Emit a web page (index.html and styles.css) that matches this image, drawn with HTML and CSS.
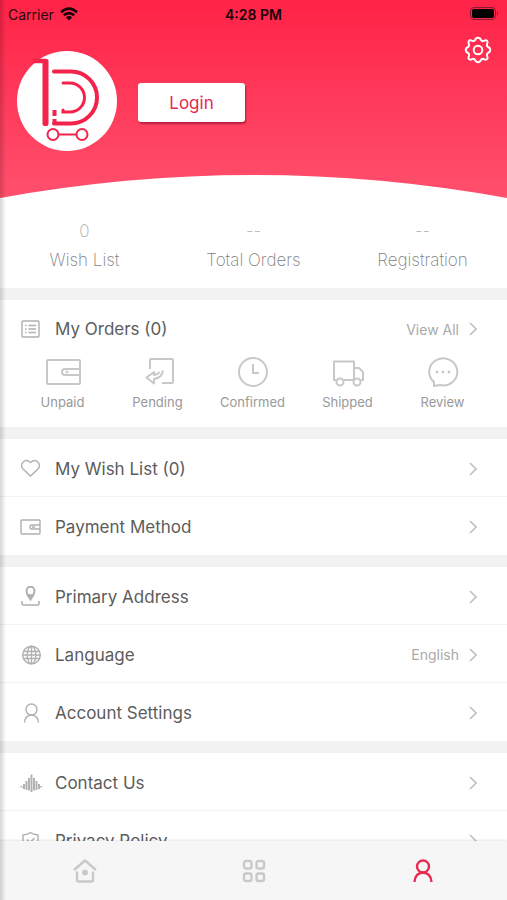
FILE: index.html
```html
<!DOCTYPE html>
<html lang="en">
<head>
    <meta charset="utf-8">
    <meta name="viewport" content="width=device-width, initial-scale=1">
    <title>My Account</title>

    <link rel="stylesheet" href="styles.css">
</head>
<body>

<main class="content">

    <header class="hero">
        <div class="status-bar">
            <div class="carrier">
                <span>Carrier</span>
                <svg width="18" height="14" viewBox="0 0 18 14" fill="none" stroke="#16040a" stroke-width="2.6">
                    <path d="M1 5.2Q9-2 17 5.2"/>
                    <path d="M3.8 8.3Q9 3.8 14.2 8.3"/>
                    <path d="M9 13.6L5.9 10.4Q9 7.8 12.1 10.4Z" fill="#16040a" stroke="none"/>
                </svg>
            </div>
            <span class="time">4:28 PM</span>
            <svg class="battery" width="29" height="14" viewBox="0 0 29 14">
                <rect x="0.5" y="0.5" width="25" height="12" rx="3.5" fill="none" stroke="#8c1730"/>
                <rect x="2" y="2" width="22" height="9" rx="2" fill="#000"/>
                <path d="M27 4.5Q29 6.5 27 8.5Z" fill="#8c1730"/>
            </svg>
        </div>

        <div class="profile">
            <svg class="avatar" width="100" height="100" viewBox="0 0 100 100" fill="none" stroke="#f3234b">
                <circle cx="50" cy="50" r="50" fill="#fff" stroke="none"/>
                <path d="M16 10H29" stroke-width="4.5"/>
                <path d="M25.500 8H30Q31.500 8 31.500 9.500V73Q31.500 75 29.500 75H27.500Q25.500 75 25.500 73Z" fill="#f3234b" stroke="none"/>
                <path d="M37 20.500H54A26 26 0 0 1 54 72.500H37" stroke-width="4" stroke-linecap="round"/>
                <path d="M46 32H53A14.500 14.500 0 0 1 53 61H46V59" stroke-width="3" stroke-linecap="round"/>
                <path d="M37.500 59V65M37.500 68V73" stroke-width="4"/>
                <path d="M42 83.500H59" stroke-width="2"/>
                <circle cx="36" cy="83.500" r="5.500" stroke-width="2"/>
                <circle cx="65" cy="83.500" r="5.500" stroke-width="2"/>
            </svg>
            <button class="login" type="button">Login</button>
            <button class="settings" type="button" aria-label="Settings">
                <svg width="28" height="28" viewBox="0 0 28 28" fill="none" stroke="#fff" stroke-width="2" stroke-linejoin="round">
                    <circle cx="14" cy="14" r="4.300"/>
                    <path d="M11 4.200C12 1 16 1 17 4.200Q18.200 5.600 19.800 4.900C22.800 3.500 24.500 5.200 23.100 8.200Q22.400 9.800 23.800 11C27 12 27 16 23.800 17Q22.400 18.200 23.100 19.800C24.500 22.800 22.800 24.500 19.800 23.100Q18.200 22.400 17 23.800C16 27 12 27 11 23.800Q9.800 22.400 8.200 23.100C5.200 24.500 3.500 22.800 4.900 19.800Q5.600 18.200 4.200 17C1 16 1 12 4.200 11Q5.600 9.800 4.900 8.200C3.500 5.200 5.200 3.500 8.200 4.900Q9.800 5.600 11 4.200Z"/>
                </svg>
            </button>
        </div>

        <svg class="curve" viewBox="0 0 507 23" preserveAspectRatio="none">
            <path d="M0 23Q253.500 -23 507 23Z" fill="#fff"/>
        </svg>
    </header>

    <section class="stats">
        <div class="stat">
            <span class="stat-value">0</span>
            <span>Wish List</span>
        </div>
        <div class="stat">
            <span class="stat-value">--</span>
            <span>Total Orders</span>
        </div>
        <div class="stat">
            <span class="stat-value">--</span>
            <span>Registration</span>
        </div>
    </section>

    <section class="group">
        <a class="row row-orders" href="#">
            <svg class="icon" viewBox="0 0 22 22">
                <rect x="2" y="3" width="17" height="16" rx="1"/>
                <path d="M5 7.500H6.500M8.500 7.500H16M5 11H6.500M8.500 11H16M5 14.500H6.500M8.500 14.500H16"/>
            </svg>
            <span class="label">My Orders (0)</span>
            <span class="note">View All</span>
            <svg class="arrow" viewBox="0 0 8 14"><path d="M1 1L7 7L1 13"/></svg>
        </a>
        <nav class="orders">
            <a href="#">
                <svg viewBox="0 0 36 32">
                    <rect x="2" y="4" width="33" height="24" rx="1"/>
                    <path d="M35 13H20Q17 13 17 16T20 19H35"/>
                    <circle cx="22" cy="16" r="0.500"/>
                </svg>
                Unpaid
            </a>
            <a href="#">
                <svg viewBox="0 0 36 32">
                    <path d="M10 13V4Q10 3 11 3H32Q33 3 33 4V26Q33 27 32 27H22"/>
                    <path d="M23 14.500Q22 22 14 23V27.500L6.500 21.500L14 16V19Q18 18.500 19.500 16"/>
                </svg>
                Pending
            </a>
            <a href="#">
                <svg viewBox="0 0 36 32">
                    <circle cx="18" cy="16" r="14"/>
                    <path d="M18 8V17H24"/>
                </svg>
                Confirmed
            </a>
            <a href="#">
                <svg viewBox="0 0 36 32">
                    <path d="M6 24H4V5.500H24V24H13"/>
                    <path d="M24 12H29L33 16V24H31M24 24V12"/>
                    <circle cx="10" cy="26" r="3.500"/>
                    <circle cx="27" cy="26" r="3.500"/>
                </svg>
                Shipped
            </a>
            <a href="#">
                <svg viewBox="0 0 36 32">
                    <path d="M9 26A14 13.500 0 1 1 15 29L9 30Z"/>
                    <path d="M10.800 16H13.200M16.800 16H19.200M22.800 16H25.200" stroke-width="2.4"/>
                </svg>
                Review
            </a>
        </nav>
    </section>

    <section class="group">
        <a class="row" href="#">
            <svg class="icon" viewBox="0 0 22 22">
                <path d="M10.500 18L3 11C-1 6 5 -0.500 10.500 4.500C16 -0.500 22 6 18 11Z"/>
            </svg>
            <span class="label">My Wish List (0)</span>
            <svg class="arrow" viewBox="0 0 8 14"><path d="M1 1L7 7L1 13"/></svg>
        </a>
        <a class="row" href="#">
            <svg class="icon" viewBox="0 0 22 22">
                <rect x="1" y="4" width="19" height="14" rx="1"/>
                <path d="M20 9H12Q10 9 10 11T12 13H20M12 11H15"/>
            </svg>
            <span class="label">Payment Method</span>
            <svg class="arrow" viewBox="0 0 8 14"><path d="M1 1L7 7L1 13"/></svg>
        </a>
    </section>

    <section class="group">
        <a class="row" href="#">
            <svg class="icon" viewBox="0 0 22 22">
                <path d="M10.500 13.500Q6.500 8 6.500 5A4 4.300 0 0 1 14.500 5Q14.500 8 10.500 13.500Z" stroke-width="2"/>
                <path d="M9 8L10.500 12L12 8" stroke-width="2"/>
                <path d="M2 15V17.500Q2 19 3.500 19H17.500Q19 19 19 17.500V15" stroke-width="1.600"/>
            </svg>
            <span class="label">Primary Address</span>
            <svg class="arrow" viewBox="0 0 8 14"><path d="M1 1L7 7L1 13"/></svg>
        </a>
        <a class="row" href="#">
            <svg class="icon" viewBox="0 0 22 22">
                <circle cx="11.500" cy="11" r="8.800"/>
                <ellipse cx="11.500" cy="11" rx="4.300" ry="8.800"/>
                <path d="M11.500 2V20M3.500 7.500H19.500M3.500 14.500H19.500M3 11H20"/>
            </svg>
            <span class="label">Language</span>
            <span class="note">English</span>
            <svg class="arrow" viewBox="0 0 8 14"><path d="M1 1L7 7L1 13"/></svg>
        </a>
        <a class="row" href="#">
            <svg class="icon" viewBox="0 0 22 22">
                <circle cx="11.500" cy="7.500" r="5.500"/>
                <path d="M4.500 20.500Q5 13.500 11.500 13Q18 13.500 18.500 20.500"/>
            </svg>
            <span class="label">Account Settings</span>
            <svg class="arrow" viewBox="0 0 8 14"><path d="M1 1L7 7L1 13"/></svg>
        </a>
    </section>

    <section class="group">
        <a class="row" href="#">
            <svg class="icon" viewBox="0 0 22 22">
                <path d="M1.500 14V15.500M4 12V17M6.500 9V18M9 6V18.500M11.500 2.500V20M14 6V18.500M16.500 9V18M19 12V17M21.200 14V15.500" stroke-width="1.900"/>
            </svg>
            <span class="label">Contact Us</span>
            <svg class="arrow" viewBox="0 0 8 14"><path d="M1 1L7 7L1 13"/></svg>
        </a>
        <a class="row" href="#">
            <svg class="icon" viewBox="0 0 22 22">
                <path d="M3 5Q8 4.500 10.500 2.500Q13 4.500 18 5V11Q18 17 10.500 20Q3 17 3 11Z"/>
                <path d="M7 9.500L10 12.500L14.500 8"/>
            </svg>
            <span class="label">Privacy Policy</span>
            <svg class="arrow" viewBox="0 0 8 14"><path d="M1 1L7 7L1 13"/></svg>
        </a>
    </section>

</main>

<nav class="tab-bar">
    <a href="#" aria-label="Home">
        <svg viewBox="0 0 26 26">
            <path d="M2 12L13 2.500L24 12"/>
            <path d="M5 13.500V21.500Q5 23.500 7 23.500H19Q21 23.500 21 21.500V13.500"/>
            <circle cx="13" cy="14.500" r="1.800" fill="#c9c9c9"/>
        </svg>
    </a>
    <a href="#" aria-label="Categories">
        <svg viewBox="0 0 26 26">
            <rect x="3" y="3" width="7.500" height="7.500" rx="2"/>
            <rect x="15.500" y="3" width="7.500" height="7.500" rx="2"/>
            <rect x="3" y="15.500" width="7.500" height="7.500" rx="2"/>
            <rect x="15.500" y="15.500" width="7.500" height="7.500" rx="2"/>
        </svg>
    </a>
    <a class="active" href="#" aria-label="Account">
        <svg viewBox="0 0 26 26">
            <circle cx="13" cy="8.500" r="6"/>
            <path d="M4.500 24Q5 15 13 14.500Q21 15 21.500 24"/>
        </svg>
    </a>
</nav>

</body>
</html>
```
FILE: styles.css
```css
* {
    box-sizing: border-box;
}

body {
    font-family: Inter, 'Liberation Sans', sans-serif;
    background-color: #f2f2f2;
    color: #5c5c5c;
    margin: 0;
    height: 100vh;
    display: flex;
    flex-direction: column;
}

/* soft shadow down the left edge of the screen */
body::before {
    content: '';
    position: fixed;
    top: 0;
    bottom: 0;
    left: 0;
    width: 6px;
    background: linear-gradient(to right, rgba(0, 0, 0, 0.16), rgba(0, 0, 0, 0));
    z-index: 2;
    pointer-events: none;
}

a {
    color: inherit;
    text-decoration: none;
}

button {
    font-family: inherit;
    border: none;
    padding: 0;
    cursor: pointer;
}

svg {
    display: block;
    flex-shrink: 0;
}

.content {
    flex: 1;
    min-height: 0;
    overflow: hidden;
    display: flex;
    flex-direction: column;
    gap: 12px;
}

.content > * {
    flex-shrink: 0;
}

/* header */
.hero {
    background: linear-gradient(#ff2347, #ff506d);
    margin-bottom: -12px;
}

.status-bar {
    display: grid;
    grid-template-columns: 1fr auto 1fr;
    align-items: center;
    height: 28px;
    padding: 0 8px;
    font-size: 14px;
    color: #2a060e;
}

.carrier {
    display: flex;
    align-items: center;
    gap: 6px;
}

.time {
    font-weight: 600;
    color: #16040a;
}

.battery {
    justify-self: end;
}

.profile {
    display: flex;
    align-items: center;
    padding: 8px 15px 10px 17px;
    height: 147px;
}

.login {
    width: 107px;
    height: 39px;
    margin-top: 4px;
    margin-left: 21px;
    background-color: #fff;
    color: #e8294f;
    font-size: 17px;
    border-radius: 3px;
    box-shadow: 1px 2px 2px rgba(110, 0, 30, 0.5);
}

.settings {
    align-self: flex-start;
    margin-left: auto;
    background: none;
}

.curve {
    width: 100%;
    height: 23px;
}

/* counters */
.stats {
    display: grid;
    grid-template-columns: repeat(3, 1fr);
    background-color: #fff;
    padding: 21px 0 16px;
    text-align: center;
    font-size: 17px;
    font-weight: 200;
    color: #808080;
}

.stat {
    display: flex;
    flex-direction: column;
    gap: 5px;
    line-height: 24px;
}

.stat-value {
    color: #aaa;
}

/* menu */
.group {
    background-color: #fff;
}

.row {
    display: flex;
    align-items: center;
    height: 58px;
    padding: 2px 30px 0 20px;
    border-bottom: 1px solid #f3f3f3;
    font-size: 17px;
}

.row:last-child {
    border-bottom: none;
}

.icon {
    width: 22px;
    height: 22px;
    margin-right: 13px;
    fill: none;
    stroke: #b0b0b0;
    stroke-width: 1.4;
}

.label {
    flex: 1;
}

.note {
    font-size: 14px;
    color: #aaa;
    margin-right: 10px;
}

.arrow {
    width: 8px;
    height: 14px;
    fill: none;
    stroke: #c0c0c0;
    stroke-width: 1.6;
}

.row-orders {
    border-bottom: none;
    height: 56px;
}

.orders {
    display: grid;
    grid-template-columns: repeat(5, 1fr);
    padding: 0 17px 15px 15px;
    font-size: 13px;
    line-height: 20px;
    color: #999;
}

.orders a {
    display: flex;
    flex-direction: column;
    align-items: center;
    gap: 4px;
}

.orders svg {
    width: 36px;
    height: 32px;
    fill: none;
    stroke: #c8c8c8;
    stroke-width: 2;
    stroke-linejoin: round;
}

/* bottom tabs */
.tab-bar {
    display: grid;
    grid-template-columns: repeat(3, 1fr);
    place-items: center;
    height: 59px;
    background-color: #f6f6f6;
    box-shadow: 0 -1px 2px rgba(0, 0, 0, 0.1);
    z-index: 1;
}

.tab-bar svg {
    width: 26px;
    height: 26px;
    fill: none;
    stroke: #c9c9c9;
    stroke-width: 2.4;
    stroke-linejoin: round;
}

.tab-bar .active svg {
    stroke: #ea2a50;
}
```
